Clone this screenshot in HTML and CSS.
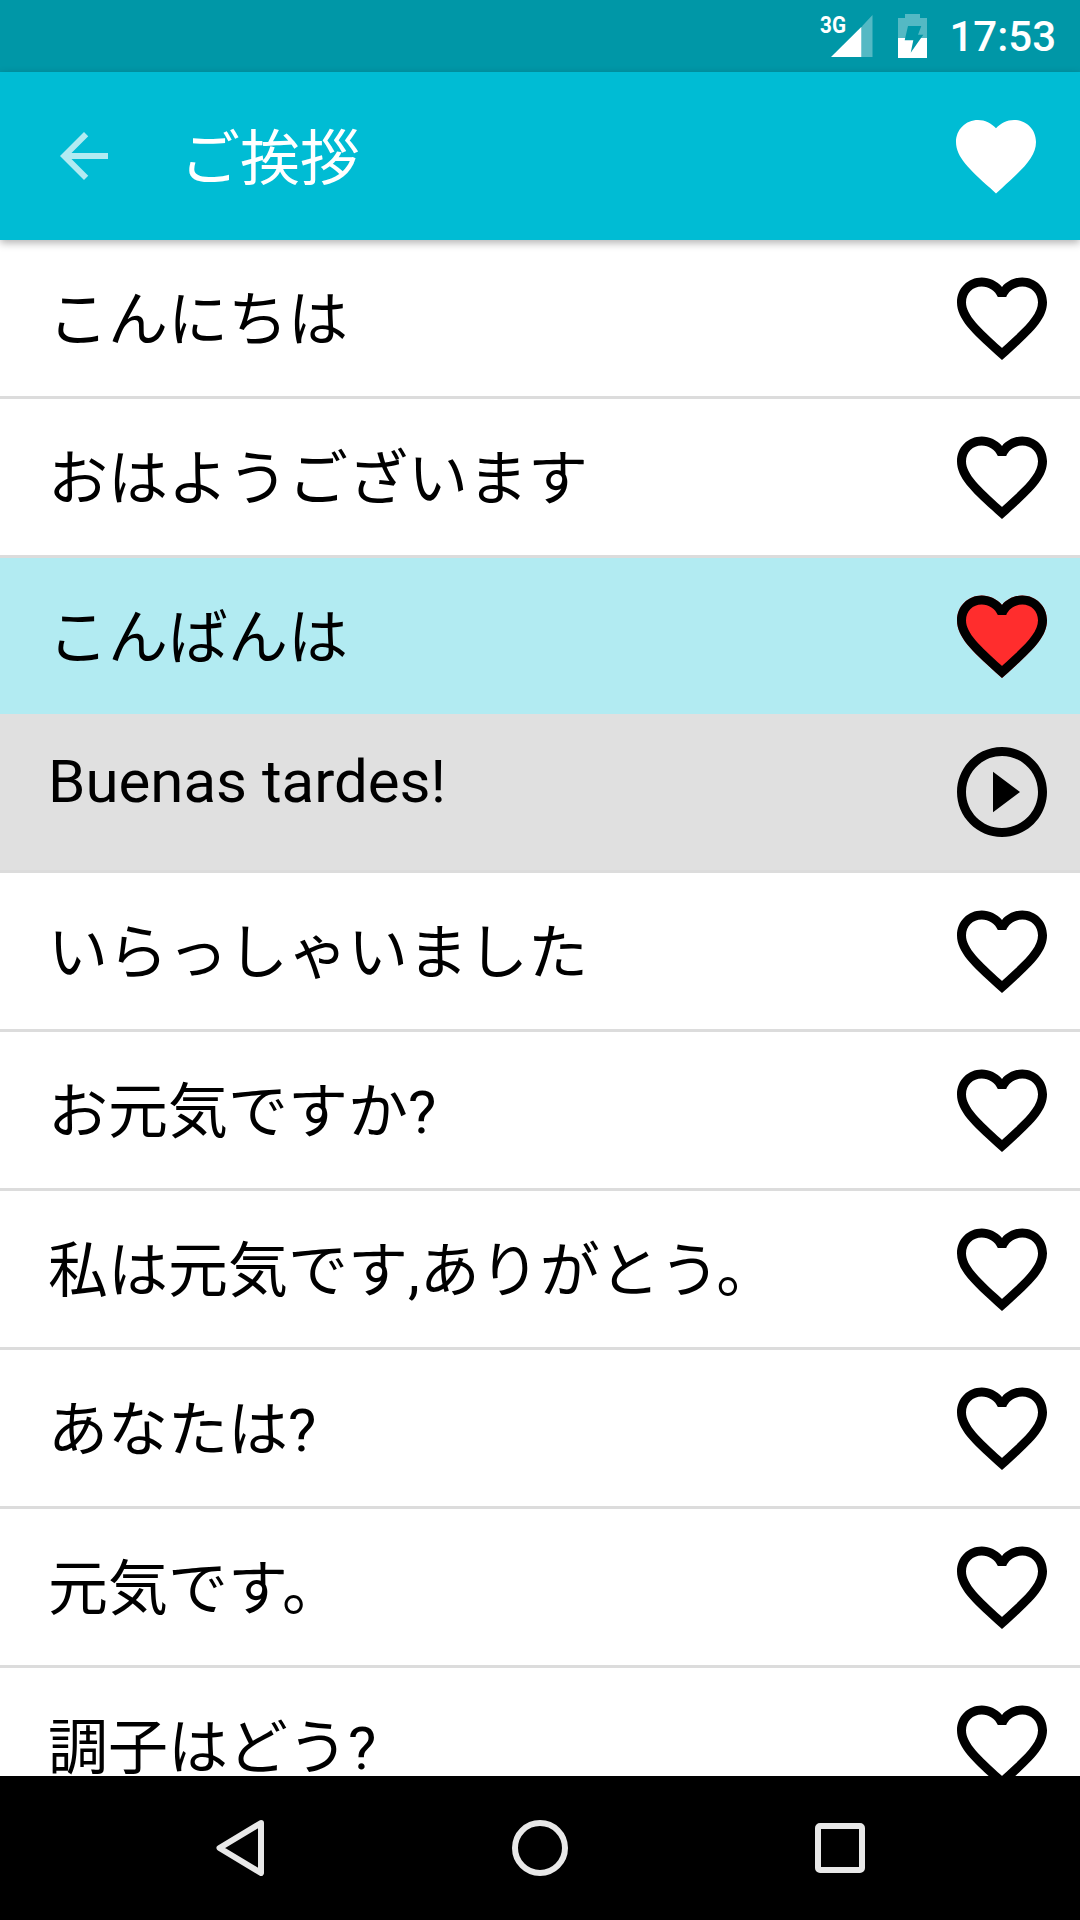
FILE: index.html
```html
<!DOCTYPE html>
<html lang="ja">
<head>
<meta charset="utf-8">
<title>ご挨拶</title>
<link rel="stylesheet" href="styles.css">
</head>
<body>
<svg class="defs" width="0" height="0" aria-hidden="true">
  <defs>
    <path id="heart-fill" d="M12 21.35l-1.45-1.32C5.4 15.36 2 12.28 2 8.5 2 5.42 4.42 3 7.5 3c1.74 0 3.41.81 4.5 2.09C13.09 3.81 14.76 3 16.5 3 19.58 3 22 5.42 22 8.5c0 3.78-3.4 6.86-8.55 11.54L12 21.35z"/>
    <path id="heart-line" d="M16.5 3c-1.74 0-3.41.81-4.5 2.09C10.91 3.81 9.24 3 7.5 3 4.42 3 2 5.42 2 8.5c0 3.78 3.4 6.86 8.55 11.54L12 21.35l1.45-1.32C18.6 15.36 22 12.28 22 8.5 22 5.42 19.58 3 16.5 3zm-4.4 15.55l-.1.1-.1-.1C7.14 14.24 4 11.39 4 8.5 4 6.5 5.5 5 7.5 5c1.54 0 3.04.99 3.57 2.36h1.87C13.46 5.99 14.96 5 16.5 5c2 0 3.5 1.5 3.5 3.5 0 2.89-3.14 5.74-7.9 10.05z"/>
  </defs>
</svg>
<div class="phone">
  <div class="statusbar">
    <svg class="net" width="56" height="52" viewBox="0 -3 56 52"><text x="0" y="20" class="net-text" textLength="26" lengthAdjust="spacingAndGlyphs">3G</text><path d="M11 44 L41.500 13.700 L41.500 44 Z" fill="#fff"/><path d="M42 13.200 L52.500 2 L52.500 44 L42 44 Z" fill="#fff" opacity=".33"/></svg>
    <svg class="batt" width="29" height="44" viewBox="0 0 29 44"><path d="M7 0 H22 V4 H29 V24 H0 V4 H7 Z" fill="#fff" opacity=".33"/><path d="M0 24 H29 V44 H0 Z" fill="#fff"/><path d="M10 12 L23.300 12 L20 20.700 L25.300 20.700 L12.700 38.700 L15.300 26.300 L6.700 26.300 Z" fill="#0097a7"/></svg>
    <span class="clock">17:53</span>
  </div>
  <header class="toolbar">
    <svg class="back" viewBox="0 0 24 24"><path d="M20 11H7.830l5.590-5.590L12 4l-8 8 8 8 1.410-1.410L7.830 13H20v-2z"/></svg>
    <h1 class="title">ご挨拶</h1>
    <svg class="fav" viewBox="0 0 24 24"><use href="#heart-fill"/></svg>
  </header>
  <main class="list">
    <div class="row"><span class="label">こんにちは</span><svg class="icon" viewBox="0 0 24 24"><use href="#heart-line"/></svg></div>
    <div class="row"><span class="label">おはようございます</span><svg class="icon" viewBox="0 0 24 24"><use href="#heart-line"/></svg></div>
    <div class="row row-active"><span class="label">こんばんは</span><svg class="icon" viewBox="0 0 24 24"><use class="heart-red" href="#heart-fill"/><use href="#heart-line"/></svg></div>
    <div class="row row-trans"><span class="label label-latin">Buenas tardes!</span><svg class="icon" viewBox="0 0 24 24"><path d="M10 16.500l6-4.500-6-4.500v9zM12 2C6.480 2 2 6.480 2 12s4.480 10 10 10 10-4.480 10-10S17.520 2 12 2zm0 18c-4.410 0-8-3.590-8-8s3.590-8 8-8 8 3.590 8 8-3.590 8-8 8z"/></svg></div>
    <div class="row"><span class="label">いらっしゃいました</span><svg class="icon" viewBox="0 0 24 24"><use href="#heart-line"/></svg></div>
    <div class="row"><span class="label">お元気ですか?</span><svg class="icon" viewBox="0 0 24 24"><use href="#heart-line"/></svg></div>
    <div class="row"><span class="label">私は元気です,ありがとう。</span><svg class="icon" viewBox="0 0 24 24"><use href="#heart-line"/></svg></div>
    <div class="row"><span class="label">あなたは?</span><svg class="icon" viewBox="0 0 24 24"><use href="#heart-line"/></svg></div>
    <div class="row"><span class="label">元気です。</span><svg class="icon" viewBox="0 0 24 24"><use href="#heart-line"/></svg></div>
    <div class="row"><span class="label">調子はどう?</span><svg class="icon" viewBox="0 0 24 24"><use href="#heart-line"/></svg></div>
  </main>
  <nav class="navbar">
    <svg class="nav-icon" width="48" height="56" viewBox="0 0 48 56"><path d="M45 3 L3.500 28 L45 53 Z" fill="none" stroke="#e8e8e8" stroke-width="6" stroke-linejoin="round"/></svg>
    <svg class="nav-icon" width="56" height="56" viewBox="0 0 56 56"><circle cx="28" cy="28" r="25" fill="none" stroke="#e8e8e8" stroke-width="6"/></svg>
    <svg class="nav-icon" width="50" height="50" viewBox="0 0 50 50"><rect x="3" y="3" width="44" height="44" rx="2" fill="none" stroke="#e8e8e8" stroke-width="6"/></svg>
  </nav>
</div>
</body>
</html>
```
FILE: styles.css
```css
* { box-sizing: border-box; }
html, body { margin: 0; padding: 0; }
body { width: 1080px; height: 1920px; overflow: hidden; background: #fff; font-family: Roboto, "Noto Sans CJK JP", sans-serif; }
.defs { position: absolute; }
.phone { display: flex; flex-direction: column; width: 1080px; height: 1920px; }
.statusbar { flex: 0 0 72px; display: flex; align-items: center; justify-content: flex-end; background: #0097a7; color: #fff; padding-right: 24px; }
.net { margin-right: 22px; }
.net-text { font-family: Roboto, sans-serif; font-size: 24px; font-weight: 700; fill: #fff; }
.batt { margin-right: 22px; }
.clock { font-size: 42px; font-weight: 500; }
.toolbar { position: relative; z-index: 1; flex: 0 0 168px; display: flex; align-items: center; background: #00bcd4; padding-left: 48px; padding-right: 36px; box-shadow: 0 3px 8px rgba(0,0,0,.3); }
.back { width: 72px; height: 72px; fill: #b2ebf2; }
.title { flex: 1; margin: 0 0 6px 60px; font-size: 60px; font-weight: 400; color: #fff; }
.fav { width: 96px; height: 96px; fill: #fff; }
.list { flex: 1; min-height: 0; overflow: hidden; }
.row { display: flex; align-items: center; justify-content: space-between; height: 159px; padding-left: 48px; padding-right: 24px; border-bottom: 3px solid #dcdcdc; color: #000; }
.row-active { height: 156px; border-bottom: 0; background: #b2ebf2; }
.row-trans { background: #e0e0e0; }
.label { padding-top: 6px; font-size: 60px; line-height: 80px; }
.label-latin { padding-top: 0; margin-bottom: 21px; }
.icon { width: 108px; height: 108px; }
.heart-red { fill: #ff2d2d; }
.navbar { flex: 0 0 144px; display: grid; grid-template-columns: repeat(3, 300px); place-items: center; padding: 0 90px; background: #000; }
```
